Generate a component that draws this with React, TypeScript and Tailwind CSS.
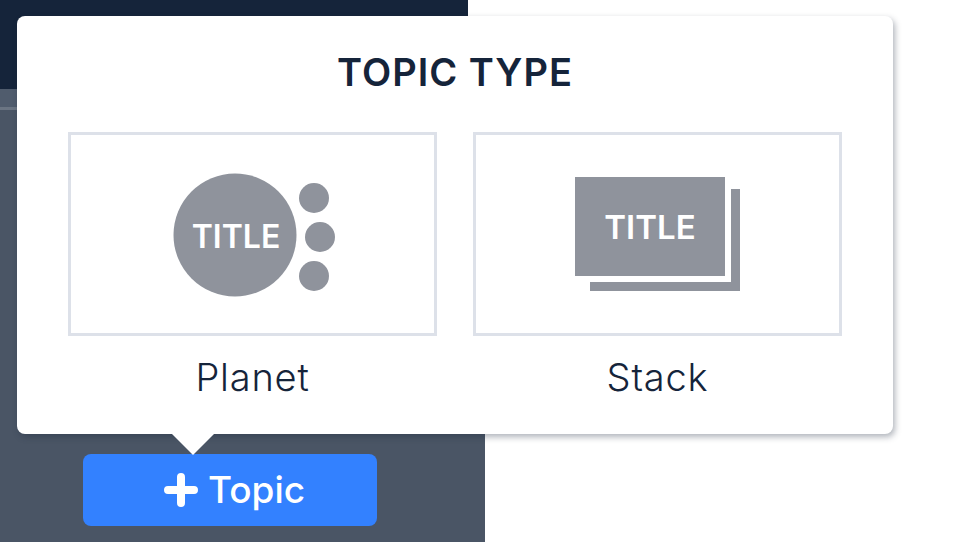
function PlanetIcon() {
    return (
        <svg width="170" height="130" viewBox="0 0 170 130" className="ml-[2px]">
            <circle cx="66" cy="66" r="61.5" fill="#8f939c" />
            <circle cx="145" cy="29" r="15" fill="#8f939c" />
            <circle cx="151" cy="68" r="15" fill="#8f939c" />
            <circle cx="145" cy="107" r="15" fill="#8f939c" />
            <text x="67" y="79" textAnchor="middle" fill="#fff" fontSize="32" fontWeight="600" fontFamily="Inter, sans-serif">
                TITLE
            </text>
        </svg>
    );
}

function StackIcon() {
    return (
        <svg width="166" height="115" viewBox="0 0 166 115" className="mt-[-2px]">
            <path d="M156 13h9v102H15v-9h141z" fill="#8f939c" />
            <rect x="0" y="1" width="150" height="99" fill="#8f939c" />
            <text x="75" y="63" textAnchor="middle" fill="#fff" fontSize="33" fontWeight="600" fontFamily="Inter, sans-serif">
                TITLE
            </text>
        </svg>
    );
}

function TypeOption({ label, children }: { label: string; children: React.ReactNode }) {
    return (
        <div className="flex flex-col items-center">
            <div className="flex h-[204px] w-[369px] items-center justify-center border-[3px] border-[#dde1e9]">
                {children}
            </div>
            <div className="mt-[17px] text-[38px] font-[350] leading-[48px] tracking-[0.8px] text-[#15243a]">{label}</div>
        </div>
    );
}

export default function App() {
    return (
        <div className="relative h-[542px] w-[973px] overflow-hidden bg-white font-['Inter',sans-serif]">
            {/* Sidebar */}
            <div className="h-[89px] w-[468px] bg-[#15243a]"></div>
            <div className="flex h-[453px] w-[485px] flex-col bg-[#4a5565]">
                <div className="h-[18px] bg-[#505c6d]"></div>
                <div className="h-[3px] bg-[#6b7583]"></div>
                <div className="flex-1"></div>
                <div className="pb-4 pl-[83px]">
                    <button className="flex h-[72px] w-[294px] items-center justify-center gap-[9px] rounded-lg bg-[#3381ff] pl-[8px] text-[37px] font-medium text-white">
                        <svg width="36" height="36" viewBox="0 0 36 36" fill="none" stroke="#fff" strokeWidth="8" strokeLinecap="round">
                            <path d="M18 5v26M5 18h26" />
                        </svg>
                        Topic
                    </button>
                </div>
            </div>

            {/* Popover */}
            <div className="absolute left-[17px] top-[16px] h-[418px] w-[876px] rounded-lg bg-white px-[51px] shadow-[2px_3px_6px_rgba(30,40,60,0.35)]">
                <h2 className="pt-[31px] text-center text-[38px] font-semibold leading-[50px] tracking-[1px] text-[#15243a]">
                    TOPIC TYPE
                </h2>
                <div className="mt-[35px] flex justify-between">
                    <TypeOption label="Planet">
                        <PlanetIcon />
                    </TypeOption>
                    <TypeOption label="Stack">
                        <StackIcon />
                    </TypeOption>
                </div>
                {/* Arrow */}
                <div className="absolute left-[155px] top-[418px] h-0 w-0 border-x-[21px] border-t-[21px] border-x-transparent border-t-white"></div>
            </div>
        </div>
    );
}
